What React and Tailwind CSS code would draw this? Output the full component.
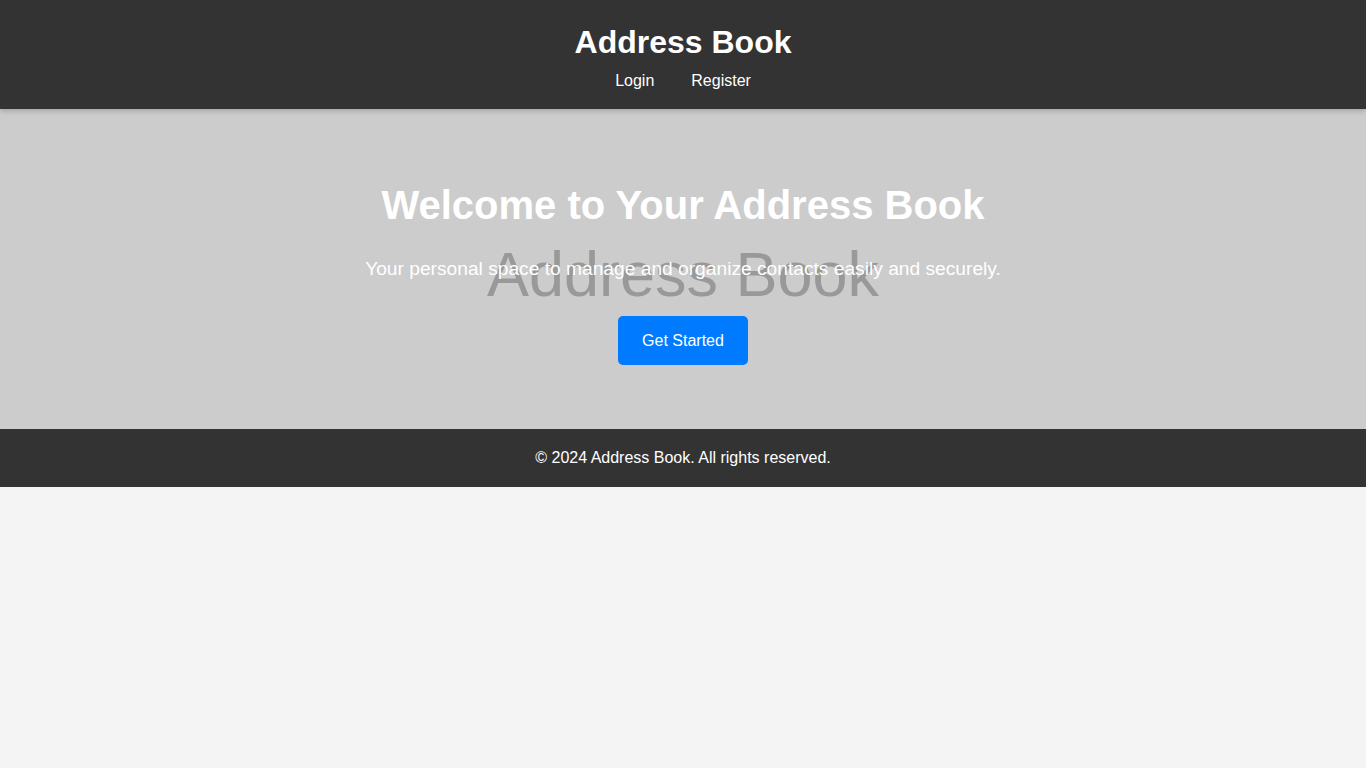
import React from "react";

const App = () => {
  return (
    <div className="min-h-screen bg-[#f4f4f4] font-['Liberation_Sans',Arial,sans-serif] text-white">
      {/* Header */}
      <header className="relative z-10 flex h-[109px] flex-col items-center bg-[#333] pt-[24px] shadow-[0_2px_5px_rgba(0,0,0,0.2)]">
        <h1 className="text-[32px] font-bold leading-[37px]">Address Book</h1>
        <nav className="mt-[11px] flex gap-[37px] text-[16px] leading-[18px]">
          <a href="#">Login</a>
          <a href="#">Register</a>
        </nav>
      </header>

      {/* Hero */}
      <section className="relative flex h-[320px] flex-col items-center bg-[#ccc] pt-[73px] text-center">
        <div className="absolute left-0 right-0 top-[129px] flex justify-center">
          <span className="text-[63px] leading-[72px] text-[#999]">Address Book</span>
        </div>
        <h2 className="relative text-[40px] font-bold leading-[46px]">
          Welcome to Your Address Book
        </h2>
        <p className="relative mt-[30px] text-[19.2px] leading-[22px]">
          Your personal space to manage and organize contacts easily and securely.
        </p>
        <button className="relative mt-[36px] h-[49px] w-[130px] rounded-[5px] bg-[#007bff] text-[16px]">
          Get Started
        </button>
      </section>

      {/* Footer */}
      <footer className="flex h-[58px] items-center justify-center bg-[#333] text-[16px]">
        <p>© 2024 Address Book. All rights reserved.</p>
      </footer>
    </div>
  );
};

export default App;
